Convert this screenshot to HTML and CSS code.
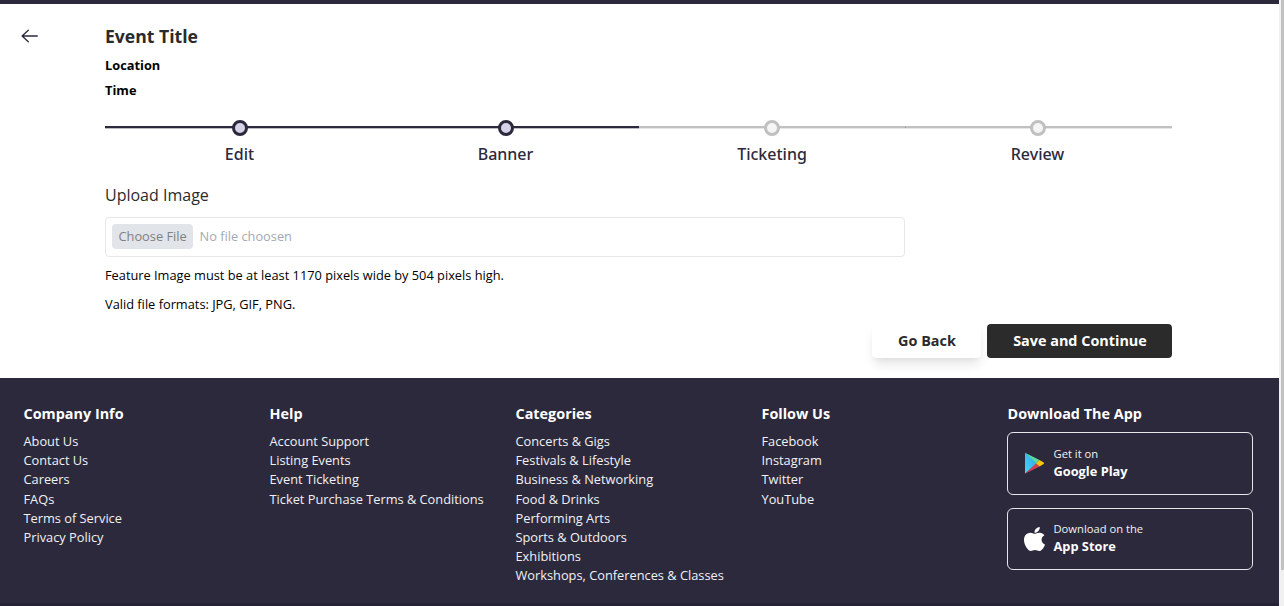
FILE: index.html
```html
<!DOCTYPE html>
<html lang="en">
<head>
<meta charset="utf-8">
<title>Event banner</title>
<link rel="stylesheet" href="styles.css">
</head>
<body>
<div class="window">
  <div class="page">
    <div class="topbar"></div>
    <main class="main">
      <a class="back" aria-label="Back">
        <svg width="18" height="14" viewBox="0 0 18 14" fill="none" stroke="#2c293d" stroke-width="1.3"><path d="M7.3 1.2 1.1 7l6.200 5.800M1.100 7H16.300" stroke-linecap="round" stroke-linejoin="round"/></svg>
      </a>
      <div class="content">
        <h1 class="title">Event Title</h1>
        <p class="meta">Location</p>
        <p class="meta">Time</p>
        <ol class="stepper">
          <li class="step done"><span class="track"><i class="dot"></i></span><span class="label">Edit</span></li>
          <li class="step done"><span class="track"><i class="dot"></i></span><span class="label">Banner</span></li>
          <li class="step"><span class="track"><i class="dot"></i></span><span class="label">Ticketing</span></li>
          <li class="step"><span class="track"><i class="dot"></i></span><span class="label">Review</span></li>
        </ol>
        <h2 class="upload-title">Upload Image</h2>
        <div class="file"><span class="choose">Choose File</span><span class="none">No file choosen</span></div>
        <p class="hint">Feature Image must be at least 1170 pixels wide by 504 pixels high.</p>
        <p class="hint">Valid file formats: JPG, GIF, PNG.</p>
        <div class="actions"><button class="btn light">Go Back</button><button class="btn dark">Save and Continue</button></div>
      </div>
    </main>
    <footer class="footer">
      <div class="col"><h3>Company Info</h3><a>About Us</a><a>Contact Us</a><a>Careers</a><a>FAQs</a><a>Terms of Service</a><a>Privacy Policy</a></div>
      <div class="col"><h3>Help</h3><a>Account Support</a><a>Listing Events</a><a>Event Ticketing</a><a>Ticket Purchase Terms &amp; Conditions</a></div>
      <div class="col"><h3>Categories</h3><a>Concerts &amp; Gigs</a><a>Festivals &amp; Lifestyle</a><a>Business &amp; Networking</a><a>Food &amp; Drinks</a><a>Performing Arts</a><a>Sports &amp; Outdoors</a><a>Exhibitions</a><a>Workshops, Conferences &amp; Classes</a></div>
      <div class="col"><h3>Follow Us</h3><a>Facebook</a><a>Instagram</a><a>Twitter</a><a>YouTube</a></div>
      <div class="col">
        <h3>Download The App</h3>
        <div class="store">
          <svg width="20" height="22" viewBox="-.5 -.3 20 22"><defs><linearGradient id="play" x1="1" x2="0" y1="0" y2="1"><stop offset="0" stop-color="#2aa8e8"/><stop offset="1" stop-color="#45d5f5"/></linearGradient></defs><path d="M.5.5V21.5L12.5 11Z" fill="url(#play)"/><path d="M.5.5 15 7.8 11.7 11Z" fill="#5bd9a0"/><path d="M.5 21.5 15 14.2 11.7 11Z" fill="#d23f52"/><path d="M15 7.6 19.2 10.3Q19.7 11 19.2 11.6L15 14.3 11.5 11Z" fill="#fdc50a"/></svg>
          <div class="store-text"><span>Get it on</span><b>Google Play</b></div>
        </div>
        <div class="store">
          <svg width="21" height="24" viewBox="4 32 376 448" preserveAspectRatio="none"><path fill="#fff" d="M318.7 268.7c-.2-36.700 16.400-64.400 50-84.800-18.800-26.900-47.200-41.700-84.700-44.600-35.500-2.800-74.300 20.700-88.500 20.700-15 0-49.400-19.700-76.400-19.700C63.300 141.200 4 184.800 4 273.500q0 39.300 14.400 81.200c12.800 36.700 59 126.700 107.200 125.200 25.200-.6 43-17.900 75.800-17.900 31.800 0 48.300 17.900 76.400 17.900 48.600-.7 90.400-82.500 102.600-119.300-65.200-30.700-61.700-90-61.700-91.900zm-56.600-164.200c27.300-32.400 24.800-61.900 24-72.500-24.100 1.400-52 16.400-67.900 34.900-17.500 19.800-27.800 44.300-25.600 71.900 26.100 2 49.900-11.400 69.500-34.300z"/></svg>
          <div class="store-text"><span>Download on the</span><b>App Store</b></div>
        </div>
      </div>
    </footer>
    <div class="footer-end"></div>
  </div>
  <div class="scrollbar"><div class="thumb"></div></div>
</div>
</body>
</html>
```
FILE: styles.css
```css
* { box-sizing: border-box; margin: 0; padding: 0; }
body { font-family: "Open Sans", "Noto Sans", sans-serif; font-size: 12.8px; line-height: 19.2px; color: #000; background: #fff; overflow: hidden; }
.window { display: flex; width: 1284px; height: 606px; }
.page { flex: 1; display: flex; flex-direction: column; }
.topbar { height: 4px; background: #2c293d; }
.main { display: flex; height: 374px; }
.back { width: 105px; padding: 25px 0 0 21px; }
.back svg { display: block; }
.content { width: 1067px; }
.title { font-size: 17.6px; line-height: 26px; font-weight: 700; color: #2b2b2b; margin-top: 19px; }
.meta { font-weight: 700; line-height: 19px; margin-top: 7px; }
.meta + .meta { margin-top: 6px; }
.stepper { list-style: none; display: grid; grid-template-columns: 267px 267px 266px 267px; margin-top: 20px; }
.step { --line: #c0c0c0; --soft: #e6e6e6; display: flex; flex-direction: column; align-items: center; }
.track { display: flex; justify-content: center; align-items: center; width: 100%; height: 16px; background: linear-gradient(var(--line) 2px, var(--soft) 2px) 0 6px / 100% 3px no-repeat; }
.dot { width: 16px; height: 16px; border: 3px solid var(--line); border-radius: 50%; background: #f5f5f5; }
.done { --line: #2c293d; --soft: #bdbcc5; }
.done .dot { background: #d6d3e8; }
.step:nth-child(1) .track { padding-left: 3px; }
.step:nth-child(2) .track { padding-left: 1px; }
.step:nth-child(4) .track { padding-right: 1px; background: linear-gradient(#999, #999) 0 7px / 1px 1px no-repeat, linear-gradient(var(--line) 2px, var(--soft) 2px) 0 6px / 100% 3px no-repeat; }
.step:nth-child(1) .label { padding-left: 2px; }
.step:nth-child(4) .label { padding-right: 2px; }
.label { font-family: "Noto Sans", "Open Sans", sans-serif; font-size: 16px; line-height: 24px; font-weight: 500; color: #2c293d; margin-top: 6px; }
.upload-title { font-size: 16px; line-height: 24px; font-weight: 400; color: #2b2b2b; margin-top: 17px; }
.file { display: flex; align-items: center; gap: 6.5px; width: 800px; height: 40px; margin-top: 10px; padding: 0 6px 2px; border: 1px solid #e5e7eb; border-radius: 4px; }
.choose, .none { height: 25px; line-height: 25px; }
.choose { background: #e1e4e8; color: #808080; border-radius: 4px; width: 81px; padding-left: 6.5px; white-space: nowrap; }
.none { color: #a3a9b5; }
.hint { margin-top: 9px; }
.hint + .hint { margin-top: 10px; }
.actions { display: flex; justify-content: flex-end; gap: 6px; margin-top: 10px; }
.btn { font: 700 14.4px/22px "Open Sans", sans-serif; height: 34px; border: 0; border-radius: 4px; text-align: center; padding-left: 1px; }
.light { width: 109px; background: #fff; color: #2b2b2b; box-shadow: 0 8px 12px -2px rgba(0, 0, 0, .1), 0 3px 5px -2px rgba(0, 0, 0, .06); }
.dark { width: 185px; background: #2b2b2b; color: #fff; }
.footer { flex: 1; display: grid; grid-template-columns: repeat(5, 246px); padding: 25px 0 0 23.5px; background: #2c293d; color: #f1f1f3; }
.footer-end { height: 3px; background: #252236; }
.col { display: flex; flex-direction: column; }
.col h3 { font-size: 14.4px; line-height: 21.6px; font-weight: 700; color: #fff; margin-bottom: 7.4px; }
.store { display: flex; align-items: center; gap: 9.5px; height: 63px; margin: 0 .5px 13px -.5px; padding-left: 16px; border: 1px solid #e5e7eb; border-radius: 6px; }
.store:last-child { height: 62px; gap: 8.5px; }
.store svg { flex: none; }
.store-text { display: flex; flex-direction: column; }
.store-text span { font-size: 11.2px; line-height: 16px; }
.store-text b { line-height: 19px; color: #fff; }
.scrollbar { width: 5px; background: #f1f1f1; padding-left: 2px; }
.thumb { height: 570px; background: #c1c1c1; }
```
